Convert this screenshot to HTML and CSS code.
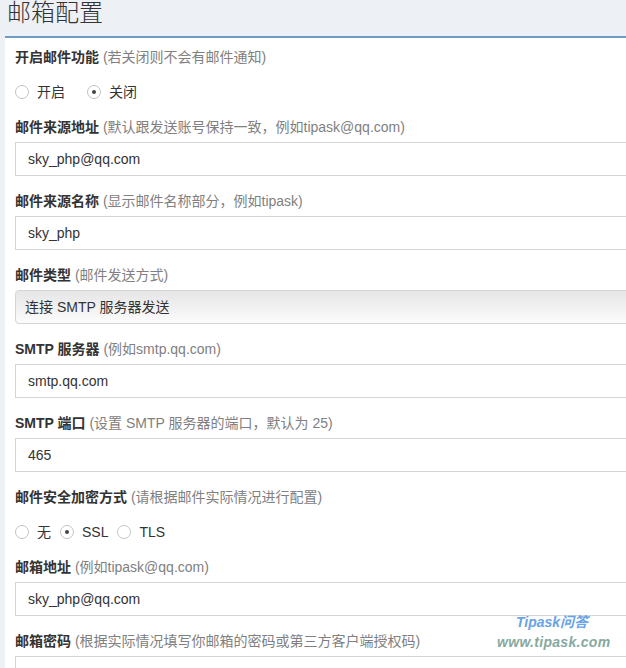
FILE: index.html
```html
<!DOCTYPE html>
<html lang="zh-CN">
<head>
  <meta charset="UTF-8">
  <title>邮箱配置</title>
  <link rel="stylesheet" href="styles.css">
</head>
<body>
  <h1 class="titulo">邮箱配置</h1>

  <div class="panel">
    <div class="grupo">
      <div class="etiqueta"><b>开启邮件功能</b> (若关闭则不会有邮件通知)</div>
      <div class="radios">
        <label class="opcion"><span class="radio"></span>开启</label>
        <label class="opcion lejos"><span class="radio marcado"></span>关闭</label>
      </div>
    </div>

    <div class="grupo">
      <div class="etiqueta"><b>邮件来源地址</b> (默认跟发送账号保持一致，例如tipask@qq.com)</div>
      <div class="caja">sky_php@qq.com</div>
    </div>

    <div class="grupo">
      <div class="etiqueta"><b>邮件来源名称</b> (显示邮件名称部分，例如tipask)</div>
      <div class="caja">sky_php</div>
    </div>

    <div class="grupo">
      <div class="etiqueta"><b>邮件类型</b> (邮件发送方式)</div>
      <div class="caja selector">连接 SMTP 服务器发送</div>
    </div>

    <div class="grupo">
      <div class="etiqueta"><b>SMTP 服务器</b> (例如smtp.qq.com)</div>
      <div class="caja">smtp.qq.com</div>
    </div>

    <div class="grupo">
      <div class="etiqueta"><b>SMTP 端口</b> (设置 SMTP 服务器的端口，默认为 25)</div>
      <div class="caja">465</div>
    </div>

    <div class="grupo">
      <div class="etiqueta"><b>邮件安全加密方式</b> (请根据邮件实际情况进行配置)</div>
      <div class="radios">
        <label class="opcion"><span class="radio"></span>无</label>
        <label class="opcion"><span class="radio marcado"></span>SSL</label>
        <label class="opcion"><span class="radio"></span>TLS</label>
      </div>
    </div>

    <div class="grupo">
      <div class="etiqueta"><b>邮箱地址</b> (例如tipask@qq.com)</div>
      <div class="caja">sky_php@qq.com</div>
    </div>

    <div class="grupo">
      <div class="etiqueta"><b>邮箱密码</b> (根据实际情况填写你邮箱的密码或第三方客户端授权码)</div>
      <div class="caja"></div>
    </div>
  </div>

  <div class="marca">
    <div class="marca-nombre">Tipask问答</div>
    <div class="marca-web">www.tipask.com</div>
  </div>
</body>
</html>
```

FILE: styles.css
```css
html,
body {
  margin: 0;
  padding: 0;
  overflow: hidden;
}

body {
  background-color: #edf0f4;
  font-family: "Liberation Sans", "Noto Sans CJK SC", sans-serif;
  font-size: 14px;
  color: #333;
  position: relative;
  height: 668px;
}

.titulo {
  margin: 0;
  padding-left: 7px;
  height: 36px;
  font-size: 24px;
  line-height: 25px;
  font-weight: 300;
  color: #333;
}

.panel {
  margin-left: 5px;
  width: 700px;
  background-color: #fff;
  border-top: 2px solid #6f9cc4;
  padding: 9px 0 0 10px;
  height: 800px;
}

.grupo {
  margin-bottom: 15px;
}

.etiqueta {
  height: 20px;
  line-height: 20px;
  margin-bottom: 5px;
  color: #808080;
  white-space: nowrap;
}

.etiqueta b {
  color: #333;
}

.radios {
  display: flex;
  gap: 9px;
  height: 20px;
  line-height: 20px;
  margin-top: 15px;
  color: #333;
}

.opcion {
  display: flex;
  align-items: center;
}

.opcion.lejos {
  margin-left: 13px;
}

/* circulos de los radio */
.radio {
  width: 12px;
  height: 12px;
  border: 1px solid #c4c4c4;
  border-radius: 50%;
  margin-right: 8px;
  position: relative;
  background: #fff;
}

.radio.marcado::after {
  content: "";
  position: absolute;
  top: 4px;
  left: 4px;
  width: 4px;
  height: 4px;
  border-radius: 50%;
  background: #444;
}

.caja {
  height: 32px;
  line-height: 32px;
  border: 1px solid #d5d5d5;
  padding-left: 12px;
  background: #fff;
  color: #333;
}

.selector {
  background: linear-gradient(#e6e6e8, #f2f2f2 60%, #fcfcfc);
  border-radius: 4px 0 0 4px;
  padding-left: 9px;
}

/* marca de agua */
.marca {
  position: absolute;
  left: 497px;
  top: 612px;
  width: 110px;
  text-align: center;
  font-style: italic;
  font-weight: bold;
}

.marca-nombre {
  color: #6aa3e6;
  font-size: 14px;
  line-height: 20px;
}

.marca-web {
  color: #86a99f;
  font-size: 14px;
  line-height: 20px;
  letter-spacing: 0.3px;
}
```
